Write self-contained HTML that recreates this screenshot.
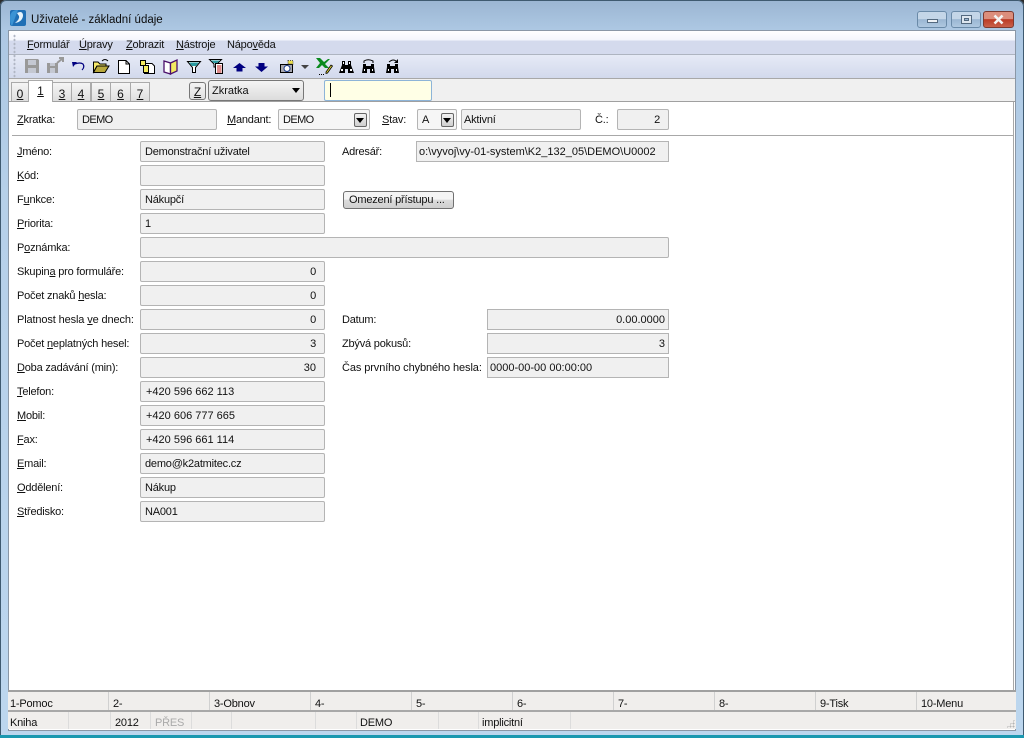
<!DOCTYPE html>
<html><head><meta charset="utf-8"><style>
html,body{margin:0;padding:0;width:1024px;height:738px;overflow:hidden;background:#2b2b2b}
*{box-sizing:border-box}
#w{position:absolute;left:0;top:0;width:1024px;height:738px;overflow:hidden;font:11px/13px "Liberation Sans","DejaVu Sans",sans-serif;letter-spacing:-.2px;color:#111;
background:linear-gradient(#9bb5d2 0,#adc8e3 30px,#b6d0e9 200px,#bcd6ee 738px);border-radius:6px 6px 0 0}
#w div{position:absolute;white-space:nowrap}
u{text-decoration:underline}
.l{height:14px;margin:2px 0 0 1px}
.f{background:#f0f0f0;border:1px solid #b4b4b4;border-radius:2px;height:21px;line-height:21px;padding:0 4px}
.r{text-align:right;padding-right:8px}
.q{text-align:right;padding-right:3px}
.s{border-radius:0}
.n{letter-spacing:0}
.t{background:linear-gradient(#f5f5f5,#dedede);border:1px solid #aaa;border-bottom:none;top:5px;height:19px;text-align:center;line-height:22px;font-size:12px;letter-spacing:0}
.fk{top:0;height:18px;line-height:24px;border-left:1px solid #d0d0d0;padding-left:4px}
.st{top:0;height:17px;line-height:22px;border-left:1px solid #dcdcdc;padding-left:3px}
svg{position:absolute;overflow:visible}
.dd{background:linear-gradient(#f2f2f2,#cfcfcf);border:1px solid #666;border-radius:2px;width:13px;height:14px}
.dd:after{content:"";position:absolute;left:1px;top:4px;border:4px solid transparent;border-top:5px solid #000;border-bottom:0}
.wb{top:11px;width:30px;height:17px;border:1px solid #6a8aa8;border-radius:3px;background:linear-gradient(#c4d6e8 45%,#9ab6d2 50%,#afc8e0)}
</style></head><body><div id="w">
<div style="left:0;top:0;width:1024px;height:738px;border:1px solid #3f5a70;border-radius:6px 6px 0 0"></div>
<svg style="left:9px;top:9px" width="18" height="18" viewBox="0 0 18 18"><rect x="1" y="1" width="16" height="16" rx="2" fill="#1f6fb5"/><path d="M1 9 Q1 1 9 1 L3 17 Q1 15 1 9Z" fill="#3a93d4"/><path d="M8 4 Q14 1 14 7 Q13 13 6 14 Q11 10 10 7 Z" fill="#e8f4fb"/></svg>
<div style="left:31px;top:13px;font-size:11.5px;line-height:14px;color:#0c0c0c;letter-spacing:0">Uživatelé - základní údaje</div>

<div class="wb" style="left:917px"><div style="left:9px;top:7px;width:11px;height:4px;background:#eef2f6;border:1px solid #53697f"></div></div>
<div class="wb" style="left:951px"><div style="left:9px;top:3px;width:11px;height:9px;border:1px solid #53697f;background:#dde6ef"><div style="left:2px;top:2px;width:5px;height:3px;background:#9ab6d2;border:1px solid #53697f"></div></div></div>
<div class="wb" style="left:983px;width:31px;border-color:#7c3a30;background:linear-gradient(#dc8e7c 45%,#bb3b25 50%,#c9604a)"><svg style="left:9px;top:3px" width="12" height="9"><path d="M1.500 .5 L9.500 8.500 M9.500 .5 L1.500 8.500" stroke="#f4f4f4" stroke-width="2.600"/></svg></div>

<!-- client -->
<div style="left:8px;top:30px;width:1008px;height:701px;background:#fff;border:1px solid #8a97a6">
 <div style="left:0;top:0;width:1006px;height:24px;background:linear-gradient(#fff 0,#f4f6fc 9px,#d4daed 10px,#d4daed 100%);border-bottom:1px solid #aeb4c0"></div>
 <div style="left:0;top:24px;width:1006px;height:23px;background:linear-gradient(#e6eaf6,#d2d9ec)"></div>
 <div style="left:0;top:47px;width:1006px;height:24px;background:#f0f0f0;border-top:1px solid #a8a8a8;border-bottom:1px solid #a0a0a0"></div>
</div>
<div style="left:1013px;top:102px;width:1px;height:588px;background:#a8a8a8"></div>
<div style="left:13px;top:34px;width:3px;height:44px;background-image:radial-gradient(#b0b6c4 40%,transparent 50%);background-size:3px 4px"></div>

<!-- menu -->
<div class="l" style="left:26px;top:37px"><u>F</u>ormulář</div>
<div class="l" style="left:78px;top:37px"><u>Ú</u>pravy</div>
<div class="l" style="left:125px;top:37px"><u>Z</u>obrazit</div>
<div class="l" style="left:175px;top:37px"><u>N</u>ástroje</div>
<div class="l" style="left:226px;top:37px">Nápo<u>v</u>ěda</div>

<!-- toolbar icons -->
<svg style="left:25px;top:59px" width="16" height="16"><path d="M0 0H13L14 1V14H0Z" fill="#999"/><rect x="3" y="1" width="8" height="5" fill="#c4c8d2"/><rect x="3" y="9" width="8" height="5" fill="#c4c8d2"/></svg>
<svg style="left:47px;top:58px" width="18" height="16"><path d="M0 5H11V15H0Z" fill="#999"/><rect x="3" y="5" width="5" height="3" fill="#c4c8d2"/><rect x="3" y="10" width="5" height="5" fill="#c4c8d2"/><path d="M10 5L15 1M12 0H16V4" stroke="#999" stroke-width="2" fill="none"/></svg>
<svg style="left:72px;top:61px" width="14" height="11"><path d="M3 3 Q8 1 11 3 Q13 6 10 9" stroke="#000080" stroke-width="1.200" fill="none"/><path d="M0 1 L5 1 L1 6Z" fill="#000080"/></svg>
<svg style="left:93px;top:58px" width="17" height="16"><path d="M9 3 Q12 0 15 3" stroke="#000" fill="none"/><path d="M.5 4H5L7 6H13V8H4L.5 14Z" fill="#f5e96a" stroke="#000"/><path d="M4 8H16L12 14.500H.5Z" fill="#b8a83c" stroke="#000"/></svg>
<svg style="left:118px;top:60px" width="12" height="14"><path d="M.5 .5H8L11.500 4V13.500H.5Z" fill="#fff" stroke="#000"/><path d="M8 .5V4H11.500" fill="none" stroke="#000"/></svg>
<svg style="left:140px;top:60px" width="16" height="15"><path d="M4.500 3.500H12L14.500 6V13.500H4.500Z" fill="#fff" stroke="#000"/><rect x=".5" y=".5" width="5" height="5" fill="#f3ea60" stroke="#000"/><rect x="3.500" y="5.500" width="5" height="7" fill="#f3ea60" stroke="#000"/></svg>
<svg style="left:163px;top:59px" width="17" height="16"><path d="M1 2L7.500 4V15L1 13Z" fill="#fff" stroke="#4b0f6b" stroke-width="1.300"/><path d="M7.500 4L14 1V12L7.500 15Z" fill="#f3ea60" stroke="#4b0f6b" stroke-width="1.300"/></svg>
<svg style="left:187px;top:61px" width="15" height="14"><path d="M.5 .5H13.500L8.500 6.500V11.500H5.500V6.500Z" fill="#fff" stroke="#000"/><path d="M2 1.500H12L9 5H5Z" fill="#2a9aa0"/></svg>
<svg style="left:209px;top:59px" width="16" height="16"><path d="M.5 .5H12.500L8 5V8H5V5Z" fill="#fff" stroke="#000"/><path d="M2 1.500H11L8 4H5Z" fill="#2a9aa0"/><rect x="6.500" y="4.500" width="7" height="10" fill="#fff" stroke="#000"/><path d="M8 7H12.500M8 9H12.500M8 11H12.500M8 13H12.500" stroke="#c01818"/></svg>
<svg style="left:233px;top:63px" width="13" height="9"><path d="M6.500 0L13 5H9.500V8.500H3.500V5H0Z" fill="#000080"/></svg>
<svg style="left:255px;top:63px" width="13" height="9"><path d="M6.500 9L13 3.500H9.500V0H3.500V3.500H0Z" fill="#000080"/></svg>
<svg style="left:280px;top:60px" width="14" height="14"><rect x=".5" y="4.500" width="12" height="8" fill="#a8a8b0" stroke="#000"/><circle cx="7" cy="8.500" r="3" fill="#fff" stroke="#1a3a8a"/><path d="M8 .5H13V4H8Z" fill="#ece04a" stroke="#555" stroke-dasharray="1 1"/></svg>
<svg style="left:301px;top:65px" width="8" height="5"><path d="M0 0H8L4 4Z" fill="#444"/></svg>
<svg style="left:316px;top:58px" width="17" height="18"><path d="M0 0H4L8 4L12 1H14L9 6L13 10H9L6 7L3 10H0L4 5Z" fill="#0a8a1e"/><path d="M10 14L15 7L16.500 8L11.500 15L10 15.500Z" fill="#e8d838" stroke="#000" stroke-width=".8"/><path d="M3 16.500H8" stroke="#000" stroke-dasharray="1 1"/></svg>
<svg style="left:339px;top:61px" width="15" height="13"><path d="M3 0H6V4H9V0H12V4L15 12H9V8H6V12H0L3 4Z" fill="#000"/><rect x="2" y="8" width="2" height="2" fill="#fff"/><rect x="11" y="8" width="2" height="2" fill="#fff"/><rect x="4" y="1" width="1" height="2" fill="#fff"/><rect x="10" y="1" width="1" height="2" fill="#fff"/></svg>
<svg style="left:362px;top:59px" width="13" height="15"><path d="M1 5H4V7H9V5H12V8L13 14H8V10H5V14H0L1 8Z" fill="#000"/><rect x="2" y="10" width="1" height="2" fill="#fff"/><rect x="10" y="10" width="1" height="2" fill="#fff"/><path d="M2 4V2Q6 -.5 11 2V4" stroke="#000" fill="none"/></svg>
<svg style="left:386px;top:59px" width="13" height="15"><path d="M1 5H4V7H9V5H12V8L13 14H8V10H5V14H0L1 8Z" fill="#000"/><rect x="2" y="10" width="1" height="2" fill="#fff"/><rect x="10" y="10" width="1" height="2" fill="#fff"/><path d="M3 3Q7 -.5 10 2" stroke="#000" fill="none"/><path d="M12 0V4H8Z" fill="#000"/></svg>

<!-- tabs -->
<div style="left:0;top:77px;width:1024px;height:24px">
 <div class="t" style="left:11px;width:18px"><u>0</u></div>
 <div class="t" style="left:28px;top:3px;width:25px;height:22px;background:#fff;z-index:2;line-height:20px"><u>1</u></div>
 <div class="t" style="left:52px;width:20px"><u>3</u></div>
 <div class="t" style="left:71px;width:20px"><u>4</u></div>
 <div class="t" style="left:91px;width:20px"><u>5</u></div>
 <div class="t" style="left:110px;width:21px"><u>6</u></div>
 <div class="t" style="left:130px;width:20px"><u>7</u></div>
</div>
<div style="left:189px;top:82px;width:17px;height:18px;border:1px solid #777;border-radius:3px;background:linear-gradient(#f4f4f4,#e0e0e0);text-align:center;line-height:18px;font-size:12px;letter-spacing:0"><u>Z</u></div>
<div style="left:208px;top:80px;width:96px;height:21px;border:1px solid #777;border-radius:3px;background:linear-gradient(#f4f4f4,#dcdcdc);line-height:20px;padding-left:3px;letter-spacing:0">Zkratka<div style="left:83px;top:7px;border:4px solid transparent;border-top:5px solid #000;border-bottom:0"></div></div>
<div style="left:324px;top:80px;width:108px;height:21px;background:#ffffe6;border:1px solid #8db4d8;border-radius:2px"><div style="left:5px;top:2px;width:1px;height:14px;background:#000"></div></div>

<!-- header -->
<div class="l" style="left:16px;top:112px"><u>Z</u>kratka:</div>
<div class="f" style="left:77px;top:109px;width:140px;letter-spacing:-.6px">DEMO</div>
<div class="l" style="left:226px;top:112px"><u>M</u>andant:</div>
<div class="f" style="left:278px;top:109px;width:92px;background:#f6f6f6;letter-spacing:-.6px">DEMO<div class="dd" style="left:75px;top:3px"></div></div>
<div class="l" style="left:381px;top:112px"><u>S</u>tav:</div>
<div class="f" style="left:417px;top:109px;width:40px;background:#f6f6f6">A<div class="dd" style="left:23px;top:3px"></div></div>
<div class="f" style="left:461px;top:109px;width:120px;padding-left:2px">Aktivní</div>
<div class="l" style="left:594px;top:112px">Č.:</div>
<div class="f r" style="left:617px;top:109px;width:52px">2</div>
<div style="left:12px;top:135px;width:1001px;height:1px;background:#a8a8a8"></div>

<!-- labels left -->
<div class="l" style="left:16px;top:144px"><u>J</u>méno:</div>
<div class="f" style="left:140px;top:141px;width:185px">Demonstrační uživatel</div>
<div class="l" style="left:16px;top:168px"><u>K</u>ód:</div>
<div class="f" style="left:140px;top:165px;width:185px"></div>
<div class="l" style="left:16px;top:192px">F<u>u</u>nkce:</div>
<div class="f" style="left:140px;top:189px;width:185px">Nákupčí</div>
<div class="l" style="left:16px;top:216px"><u>P</u>riorita:</div>
<div class="f" style="left:140px;top:213px;width:185px">1</div>
<div class="l" style="left:16px;top:240px">P<u>o</u>známka:</div>
<div class="f" style="left:140px;top:237px;width:529px"></div>
<div class="l" style="left:16px;top:264px">Skupin<u>a</u> pro formuláře:</div>
<div class="f r" style="left:140px;top:261px;width:185px">0</div>
<div class="l" style="left:16px;top:288px">Počet znaků <u>h</u>esla:</div>
<div class="f r" style="left:140px;top:285px;width:185px">0</div>
<div class="l" style="left:16px;top:312px;letter-spacing:-.13px">Platnost hesla <u>v</u>e dnech:</div>
<div class="f r" style="left:140px;top:309px;width:185px">0</div>
<div class="l" style="left:16px;top:336px">Počet <u>n</u>eplatných hesel:</div>
<div class="f r" style="left:140px;top:333px;width:185px">3</div>
<div class="l" style="left:16px;top:360px"><u>D</u>oba zadávání (min):</div>
<div class="f r n" style="left:140px;top:357px;width:185px">30</div>
<div class="l" style="left:16px;top:384px"><u>T</u>elefon:</div>
<div class="f n" style="left:140px;top:381px;width:185px;padding-left:5px">+420 596 662 113</div>
<div class="l" style="left:16px;top:408px"><u>M</u>obil:</div>
<div class="f n" style="left:140px;top:405px;width:185px;padding-left:5px">+420 606 777 665</div>
<div class="l" style="left:16px;top:432px"><u>F</u>ax:</div>
<div class="f n" style="left:140px;top:429px;width:185px;padding-left:5px">+420 596 661 114</div>
<div class="l" style="left:16px;top:456px"><u>E</u>mail:</div>
<div class="f" style="left:140px;top:453px;width:185px">demo@k2atmitec.cz</div>
<div class="l" style="left:16px;top:480px"><u>O</u>ddělení:</div>
<div class="f" style="left:140px;top:477px;width:185px">Nákup</div>
<div class="l" style="left:16px;top:504px"><u>S</u>tředisko:</div>
<div class="f" style="left:140px;top:501px;width:185px">NA001</div>

<!-- right -->
<div class="l" style="left:341px;top:144px">Adresář:</div>
<div class="f s n" style="left:416px;top:141px;width:253px;padding-left:2px;overflow:hidden">o:\vyvoj\vy-01-system\K2_132_05\DEMO\U0002</div>
<div style="left:343px;top:191px;width:111px;height:18px;border:1px solid #707070;border-radius:3px;background:linear-gradient(#f4f4f4 45%,#dcdcdc 50%,#cfcfcf);line-height:16px;padding-left:5px">Omezení přístupu ...</div>
<div class="l" style="left:341px;top:312px">Datum:</div>
<div class="f s q n" style="left:487px;top:309px;width:182px">0.00.0000</div>
<div class="l" style="left:341px;top:336px">Zbývá pokusů:</div>
<div class="f s q n" style="left:487px;top:333px;width:182px">3</div>
<div class="l" style="left:341px;top:360px;letter-spacing:-.1px">Čas prvního chybného hesla:</div>
<div class="f s n" style="left:487px;top:357px;width:182px;padding-left:2px">0000-00-00 00:00:00</div>

<!-- function bar -->
<div style="left:8px;top:690px;width:1008px;height:2px;background:#a0a0a0"></div>
<div style="left:8px;top:692px;width:1008px;height:20px;background:#f0eeec;border-bottom:2px solid #a8a8a8">
 <div class="fk" style="left:0;border:0;padding-left:2px">1-Pomoc</div>
 <div class="fk" style="left:100px">2-</div>
 <div class="fk" style="left:201px">3-Obnov</div>
 <div class="fk" style="left:302px">4-</div>
 <div class="fk" style="left:403px">5-</div>
 <div class="fk" style="left:504px">6-</div>
 <div class="fk" style="left:605px">7-</div>
 <div class="fk" style="left:706px">8-</div>
 <div class="fk" style="left:807px">9-Tisk</div>
 <div class="fk" style="left:908px">10-Menu</div>
</div>
<div style="left:8px;top:712px;width:1008px;height:17px;background:#f0eeec">
 <div class="st" style="left:0;border:0;padding-left:2px">Kniha</div>
 <div class="st" style="left:60px"></div>
 <div class="st" style="left:102px;padding-left:4px">2012</div>
 <div class="st" style="left:142px;color:#aaa;padding-left:4px">PŘES</div>
 <div class="st" style="left:183px"></div>
 <div class="st" style="left:223px"></div>
 <div class="st" style="left:307px"></div>
 <div class="st" style="left:348px;padding-left:3px">DEMO</div>
 <div class="st" style="left:430px"></div>
 <div class="st" style="left:470px;padding-left:3px">implicitní</div>
 <div class="st" style="left:562px"></div>
 <div style="left:998px;top:7px;width:9px;height:9px;background-image:radial-gradient(#b4b4b4 45%,transparent 50%);background-size:3px 3px;clip-path:polygon(100% 0,100% 100%,0 100%)"></div>
</div>
<div style="left:0;top:735px;width:1024px;height:3px;background:#1a98b0"></div>
</div></body></html>
